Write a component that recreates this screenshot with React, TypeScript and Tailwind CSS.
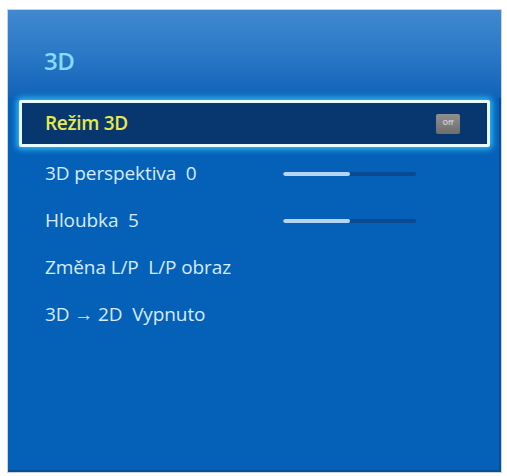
export default function App() {
  const items = [
    { label: '3D perspektiva  0', slider: 50 },
    { label: 'Hloubka  5', slider: 50 },
    { label: 'Změna L/P  L/P obraz' },
    { label: '3D → 2D  Vypnuto' },
  ]

  return (
    <div className="w-[507px] h-[476px] bg-white pt-[9px] pl-[7px]" style={{ fontFamily: '"Open Sans", "Noto Sans", sans-serif' }}>
      <div className="w-[495px] h-[464px] border border-[#c9d3dc] bg-[#0561b8] shadow-[inset_-2px_-2px_0_#0a4f96] flex flex-col">
        {/* header */}
        <div className="h-[88px] bg-gradient-to-b from-[#4189d1] via-[#2a78c6] to-[#0e63ba] flex items-center pl-[36px] pt-[14px]">
          <span className="text-[24px] font-semibold text-[#86dcff] tracking-[-0.5px]">3D</span>
        </div>

        {/* focused row */}
        <div className="mx-[11px] mt-[2px] rounded-[2px] border-[3px] border-[#e8fbff] shadow-[0_0_6px_2px_#35c4ff] bg-[#08376f] h-[47px] flex items-center pl-[23px] pr-[27px]">
          <span className="flex-1 text-[19px] font-semibold text-[#e6ea4a] tracking-[-0.3px]">Režim 3D</span>
          <span className="w-[24px] h-[20px] bg-gradient-to-b from-[#8f8f8f] to-[#6e6e6e] rounded-[2px] text-[7px] text-[#c8c8c8] flex items-center justify-center font-bold">Off</span>
        </div>

        {/* items */}
        <div className="flex flex-col pl-[37px] mt-[3px]">
          {items.map(it => (
            <div key={it.label} className="h-[47px] flex items-center">
              <span className="w-[238px] text-[19px] font-medium text-[#d6ebff] tracking-[-0.1px] whitespace-pre">{it.label}</span>
              {it.slider !== undefined && (
                <div className="w-[133px] h-[4px] bg-[#0b4a90] rounded-full overflow-hidden">
                  <div className="h-full bg-[#b4d6f6] rounded-full" style={{ width: `${it.slider}%` }} />
                </div>
              )}
            </div>
          ))}
        </div>
      </div>
    </div>
  )
}
